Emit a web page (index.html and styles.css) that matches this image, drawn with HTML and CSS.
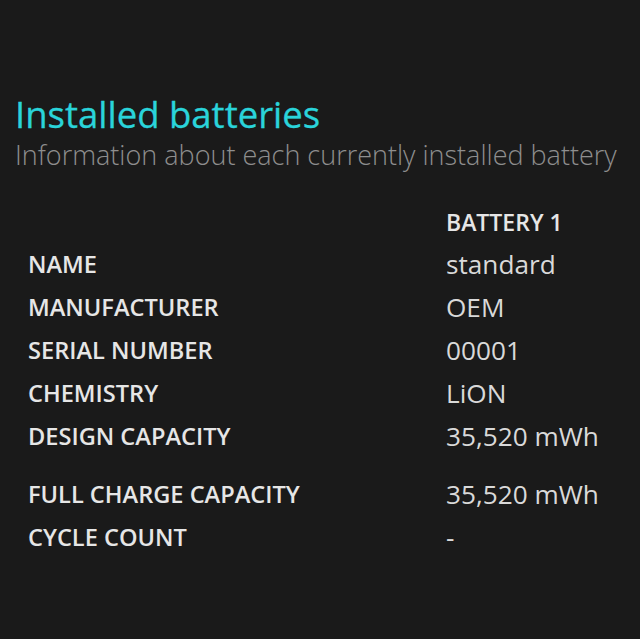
FILE: index.html
```html
<!DOCTYPE html>
<html lang="en">
  <head>
    <meta charset="UTF-8" />
    <meta name="viewport" content="width=device-width, initial-scale=1.0" />
    <title>Battery report</title>
    <link rel="stylesheet" href="styles.css">
  </head>
  <body>
    <div class="section">
      <h1 class="title">Installed batteries</h1>
      <div class="subtitle">Information about each currently installed battery</div>

      <div class="specs">
        <div class="label head-row"></div>
        <div class="head head-row">BATTERY 1</div>

        <div class="label">NAME</div>
        <div class="value">standard</div>

        <div class="label">MANUFACTURER</div>
        <div class="value">OEM</div>

        <div class="label">SERIAL NUMBER</div>
        <div class="value">00001</div>

        <div class="label">CHEMISTRY</div>
        <div class="value">LiON</div>

        <div class="label">DESIGN CAPACITY</div>
        <div class="value">35,520 mWh</div>

        <div class="label spaced">FULL CHARGE CAPACITY</div>
        <div class="value spaced">35,520 mWh</div>

        <div class="label">CYCLE COUNT</div>
        <div class="value">-</div>
      </div>
    </div>
  </body>
</html>
```

FILE: styles.css
```css
html,
body {
  margin: 0;
  height: 100%;
}
body {
  background-color: #1a1a1a;
  font-family: "Open Sans", "Noto Sans", sans-serif;
  color: #e4e4e4;
}
.section {
  padding: 92px 0 0 15px;
}
.title {
  margin: 0;
  font-size: 36.5px;
  font-weight: 400;
  line-height: 44px;
  color: #2ad4da;
  -webkit-text-stroke: 0.3px #2ad4da;
}
.subtitle {
  margin: 0;
  font-size: 27px;
  font-weight: 300;
  line-height: 38px;
  color: #8e8e8e;
}
.specs {
  display: grid;
  grid-template-columns: 418px auto;
  margin: 28px 0 0 13px;
  line-height: 43px;
}
.label {
  font-size: 23.6px;
  font-weight: 600;
  color: #e6e6e6;
}
.head {
  font-size: 23px;
  font-weight: 600;
  color: #e6e6e6;
}
.head-row {
  line-height: 41px;
}
.value {
  font-size: 26.2px;
  font-weight: 400;
  color: #d9d9d9;
}
.spaced {
  margin-top: 15px;
}
```
